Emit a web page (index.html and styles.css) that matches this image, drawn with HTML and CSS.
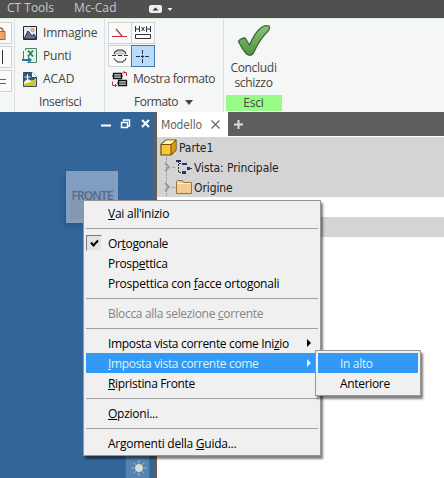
FILE: index.html
```html
<!DOCTYPE html>
<html lang="it">
<head>
<meta charset="utf-8">
<title>Parte1</title>
<link rel="stylesheet" href="styles.css">
</head>
<body>
<div class="app">
  <header class="tabs">
    <span class="tab tab-ct">CT Tools</span>
    <span class="tab tab-mc">Mc-Cad</span>
    <svg class="toggle" width="24" height="9" viewBox="0 0 24 9"><rect width="13" height="8" rx="2" fill="#eee"/><path d="M3.500 5.500h6L6.500 2.500z" fill="#333"/><path d="M18.500 3h5L21 6z" fill="#eee"/></svg>
  </header>
  <section class="ribbon">
    <div class="group group-cut">
      <span class="btn cut"><svg width="14" height="20" viewBox="0 0 14 20"><path d="M-2 9V7q2.500-4 5 0v2" fill="none" stroke="#a65b3c" stroke-width="1.500"/><rect x="-3" y="8.500" width="8" height="8" fill="#f2a36c" stroke="#b4623c"/></svg></span>
      <span class="btn cut"><svg width="14" height="20" viewBox="0 0 14 20"><path d="M2.500 3v14" stroke="#333"/></svg></span>
      <span class="btn cut"><svg width="14" height="20" viewBox="0 0 14 20"><path d="M0 8.500h6M0 12.500h6" stroke="#c0393c"/></svg></span>
    </div>
    <div class="group group-insert">
      <div class="tool"><svg width="16" height="16" viewBox="0 0 16 16"><path d="M1.500 1.500h13v13h-13z" fill="#e6e9f2" stroke="#20243c"/><path d="M2 14l4-8 4 5 2-2 2.500 5z" fill="#65708c" stroke="#222944"/><circle cx="10.500" cy="5" r="1.700" fill="#f2b880" stroke="#a47658" stroke-width=".5"/></svg><span class="t-img">Immagine</span></div>
      <div class="tool"><svg width="16" height="16" viewBox="0 0 16 16"><path d="M3.500 2.500v-2h11v14h-9" fill="#e5f0e7" stroke="#508267"/><path d="M1.500 3v8M14.500 4v9" stroke="#398171"/><path d="M6 2.500l5 6M11 2.500l-5 6" stroke="#2c8055" stroke-width="1.800"/><path d="M0 11h6V8.500l4 3.500-4 3.500V13H0z" fill="#2878a3"/></svg><span class="t-pun">Punti</span></div>
      <div class="tool"><svg width="16" height="16" viewBox="0 0 16 16"><path d="M1.500 1.500h9l4 4v10h-13z" fill="#315875" stroke="#305269"/><path d="M10 1v5h5" fill="#fff"/><path d="M2 11q3-4 6-2t6-2v8H2z" fill="#f2f3e8"/><path d="M2 13q6-1 12-5v7H2z" fill="#d9c51c"/><path d="M5.500 3v6M2.500 6h6" stroke="#fff"/></svg><span class="t-aca">ACAD</span></div>
      <div class="caption"><span class="t-ins">Inserisci</span></div>
    </div>
    <div class="group group-format">
      <div class="pair">
        <span class="btn"><svg width="22" height="20" viewBox="0 0 22 20"><path d="M3 13.500h15M7 6l6 7" stroke="#bc3035" fill="none" stroke-width="1.200"/></svg></span>
        <span class="btn"><svg width="22" height="20" viewBox="0 0 22 20"><path d="M3.500 3v6M3.500 6h4M7.500 3v6M18.500 3v6M14.500 6h4M14.500 3v6M9.500 4l3 4M12.500 4l-3 4M3.500 11.500h15v4h-15z" fill="none" stroke="#333"/></svg></span>
      </div>
      <div class="pair">
        <span class="btn"><svg width="22" height="20" viewBox="0 0 22 20"><path d="M5 8q0-4 4-4h4q4 0 4 4v1H5z" fill="#ccc"/><path d="M5 8q0-3 3-3V4h6v1q3 0 3 3M5 12q1 3 3 3v1h6v-1q3 0 3-3" fill="none" stroke="#333"/><path d="M3 9.500h4m2 0h4m2 0h4" stroke="#333"/></svg></span>
        <span class="btn active"><svg width="22" height="20" viewBox="0 0 22 20"><path d="M4 10.500h4m1 0h3m1 0h4M10.500 4v4m0 1v3m0 1v4" stroke="#20354c"/></svg></span>
      </div>
      <div class="tool"><svg width="16" height="16" viewBox="0 0 16 16"><path d="M1.500 2.500h8v5h-8zM6.500 9.500h8v5h-8z" fill="#ddd" stroke="#111" stroke-width="1.300"/><path d="M0 5h11M5 12h10" stroke="#111"/><path d="M12 1.500h2.500V5M.500 10.500v4H4M12.500 0L11 1.500 12.500 3M3 13l1.500 1.500L3 16" stroke="#bf3036" fill="none"/></svg><span class="t-mos">Mostra formato</span></div>
      <div class="caption"><span class="t-for">Formato</span><i class="down"></i></div>
    </div>
    <div class="group group-exit">
      <svg width="34" height="34" viewBox="0 0 34 34"><defs><linearGradient id="g" x2="0" y2="1"><stop stop-color="#8cc478"/><stop offset="1" stop-color="#4d943f"/></linearGradient></defs><path d="M1.500 17.500Q4 14 8 14l4.500 7Q18 8 25 3q4-2 7-1 1.500 2-1 5-9 9-14.500 22-3 4-7 1Q5 25 1.500 17.500z" fill="url(#g)" stroke="#3f6b3f" stroke-width="1.300"/></svg>
      <div class="finish">Concludi<br>schizzo</div>
      <div class="exit"><span class="t-esc">Esci</span></div>
    </div>
  </section>
  <main class="workspace">
    <section class="viewport">
      <svg class="winctl" width="50" height="10" viewBox="0 0 50 10"><path d="M0 6.500h10" stroke="#fff" stroke-width="2"/><path d="M22.500 2.500V1h6v6H27M20.500 3.500h6v5h-6z" fill="none" stroke="#fff" stroke-width="1.400"/><path d="M41 1l7 7M48 1l-7 7" stroke="#fff" stroke-width="2"/></svg>
      <div class="cube"><span class="t-cub">FRONTE</span></div>
      <div class="navbar"><svg width="16" height="16" viewBox="0 0 16 16"><path d="M8 0v16M0 8h16M2.500 2.500l11 11M13.500 2.500l-11 11" stroke="#a5bfd2"/><circle cx="8" cy="8" r="4.500" fill="#d4ddd9" stroke="#5c7f9f"/></svg></div>
    </section>
    <aside class="browser">
      <div class="browser-tabs"><div class="model"><span class="t-mod">Modello</span><svg width="9" height="9" viewBox="0 0 9 9"><path d="M.500.500l8 8M8.500.500l-8 8" stroke="#666" stroke-width="1.200"/></svg></div><svg class="plus" width="9" height="9" viewBox="0 0 9 9"><path d="M4.500 0v9M0 4.500h9" stroke="#ddd" stroke-width="2"/></svg></div>
      <div class="tree">
        <div class="node root"><svg width="17" height="17" viewBox="0 0 17 17"><path d="M1 5.500L6 1h10v10l-5 5H1z" fill="#f6c936" stroke="#6c4a13" stroke-width="1.200"/><path d="M2 5l4-3.500h9L11 5z" fill="#fff7bf"/><path d="M11 6l4.500-4v9L11 15.500z" fill="#dd9b13"/><path d="M1 5.500h10V16M11 5.500L16 1" fill="none" stroke="#6c4a13"/></svg><span class="t-par">Parte1</span></div>
        <div class="node child"><svg class="twist" width="13" height="20" viewBox="0 0 13 20"><path d="M3.500 0v20M9 10.500h4" stroke="#888" stroke-dasharray="1 1"/><path d="M2 6l4 4-4 4" fill="none" stroke="#999" stroke-width="1.800"/></svg><svg width="17" height="16" viewBox="0 0 17 16"><path d="M2.500 2v11M3 4.500h6M3 13.500h4M11 9.500h5" fill="none" stroke="#333" stroke-dasharray="2 1"/><path d="M0 1h5v2H0zM6 4h5v2H6zM6 12h4v3H6zM11 8h3v3h-3z" fill="#24386e"/></svg><span class="t-vis">Vista: Principale</span></div>
        <div class="node child"><svg class="twist" width="13" height="20" viewBox="0 0 13 20"><path d="M3.500 0v20M9 10.500h4" stroke="#888" stroke-dasharray="1 1"/><path d="M2 6l4 4-4 4" fill="none" stroke="#999" stroke-width="1.800"/></svg><svg width="17" height="16" viewBox="0 0 17 16"><path d="M.500 14.500v-12l1-1h5l1 2h8v11z" fill="#f0cd91" stroke="#987244"/><path d="M1 4.500h14" stroke="#fff0c7"/></svg><span class="t-ori">Origine</span></div>
      </div>
      <div class="row-blank"></div>
      <div class="row-grey"></div>
    </aside>
  </main>
</div>
<nav class="menu main-menu">
  <div class="item"><span class="m1"><u>V</u>ai all'inizio</span></div>
  <hr>
  <div class="item"><i class="check"><svg width="9" height="9" viewBox="0 0 9 9"><path d="M1 3.500l2.500 3L8 1.500" fill="none" stroke="#000" stroke-width="2"/></svg></i><span class="m2">Or<u>t</u>ogonale</span></div>
  <div class="item"><span class="m3">Prosp<u>e</u>ttica</span></div>
  <div class="item"><span class="m4">Prospettica con <u>f</u>acce ortogonali</span></div>
  <hr>
  <div class="item disabled"><span class="m5">Blocca alla selezione <u>c</u>orrente</span></div>
  <hr>
  <div class="item"><span class="m6">Imposta vista corrente come Ini<u>z</u>io</span><i class="arrow"></i></div>
  <div class="item selected"><span class="m7"><u>I</u>mposta vista corrente come</span><i class="arrow"></i></div>
  <div class="item"><span class="m8"><u>R</u>ipristina Fronte</span></div>
  <hr>
  <div class="item"><span class="m9"><u>O</u>pzioni...</span></div>
  <hr>
  <div class="item"><span class="m10">Argomenti della <u>G</u>uida...</span></div>
</nav>
<nav class="menu sub-menu">
  <div class="item selected"><span class="s1">In alto</span></div>
  <div class="item"><span class="s2">Anteriore</span></div>
</nav>
</body>
</html>
```
FILE: styles.css
```css
* { box-sizing: border-box; }
body { margin: 0; width: 444px; height: 478px; overflow: hidden; position: relative; font: 12px/20px "Open Sans", "Noto Sans", sans-serif; color: #444; }
svg { display: block; flex: none; overflow: visible; }
span { white-space: nowrap; }
.app { display: flex; flex-direction: column; height: 478px; }
.tabs { height: 18px; background: #505050; border-bottom: 1px solid #3f5a40; display: flex; color: #c8c8c8; line-height: 16px; padding-left: 7px; flex: none; }
.tab-ct { width: 67px; }
.tab-mc { width: 75px; }
.tab-mc { letter-spacing: .1px; }
.toggle { margin-top: 5px; }
.ribbon { height: 94px; background: #f5f6f6; border-top: 1px solid #e1f2dc; display: flex; flex: none; }
.group { border-right: 1px solid #dcdfe0; display: flex; flex-direction: column; flex: none; }
.group-cut { width: 15px; padding-top: 3px; gap: 2px; }
.btn { width: 24px; height: 22px; border: 1px solid #d0d2d3; background: #fafafa; display: flex; }
.btn.cut { width: 12px; border-left: 0; overflow: hidden; }
.btn.active { background: #b7dbf8; border-color: #4379a8; }
.group-insert { width: 90px; padding: 3px 0 0 7px; }
.tool { height: 24px; display: flex; align-items: center; gap: 5px; padding-bottom: 1px; }
.caption { height: 21px; display: flex; align-items: center; padding-top: 1px; }
.group-insert .caption { padding-left: 17px; }
.group-format { width: 119px; padding: 3px 0 0 3px; }
.pair { display: flex; height: 24px; }
.pair .btn + .btn { margin-left: -1px; }
.group-format .tool { padding-left: 4px; }
.group-format .caption { padding-left: 26px; gap: 7px; }
.down { border: 4px solid transparent; border-top: 5px solid #444; border-bottom: 0; }
.group-exit { width: 58px; border: 0; align-items: center; padding: 5px 0 0 1px; }
.finish { margin-top: 2px; line-height: 15px; text-align: center; letter-spacing: -.3px; }
.exit { width: 56px; height: 16px; background: #98fb85; line-height: 16px; text-align: center; margin-top: 5px; letter-spacing: -.2px; }
.t-img { letter-spacing: -.2px; }
.t-pun { letter-spacing: -.2px; }
.t-ins { letter-spacing: -.35px; }
.t-mos { letter-spacing: -.43px; }
.t-for { letter-spacing: -.5px; }
.workspace { display: flex; flex: 1; }
.viewport { width: 157px; background: #346598; border-right: 4px solid #5e5e5e; display: flex; flex-direction: column; }
.winctl { margin: 7px 0 0 101px; }
.cube { width: 52px; height: 52px; margin: 42px 0 0 66px; background: linear-gradient(#7f9fc4, #8795ae); border: 4px solid #829fc1; box-shadow: -3px 4px 5px -1px #29588b; line-height: 42px; text-align: center; color: #566b8c; font-size: 12px; font-weight: 600; letter-spacing: -.9px; }
.navbar { width: 25px; margin: auto 0 0 125px; height: 30px; background: #5584b3; border: 1px solid #426f9d; border-bottom: 0; padding: 11px 0 0 5px; }
.browser { flex: 1; background: #fff; font-family: "DejaVu Sans Condensed", "DejaVu Sans", sans-serif; color: #222; }
.browser-tabs { height: 24px; background: #5e5e5e; display: flex; }
.model { width: 71px; background: #fff; padding: 1px 0 0 4px; display: flex; align-items: center; gap: 9px; color: #666; }
.t-mod { letter-spacing: -.15px; }
.plus { margin: 8px 0 0 6px; }
.tree { margin-top: 1px; height: 60px; background: #d4d4d4; }
.node { height: 20px; display: flex; align-items: center; gap: 2px; }
.node span { padding-top: 1px; letter-spacing: -.1px; }
.root { padding-left: 3px; }
.child { padding-left: 6px; }
.twist { margin-right: -3px; }
.child .twist + svg { margin-left: 1px; }
.child span { margin-left: -1px; }
.row-blank { height: 20px; }
.row-grey { height: 20px; background: #d4d4d4; }
.menu { position: absolute; background: #f0f0f0; border: 1px solid #979797; padding: 2px; color: #000; box-shadow: 2px 3px 2px rgba(0,0,0,.5); }
.main-menu { left: 83px; top: 200px; width: 238px; height: 256px; }
.sub-menu { left: 315px; top: 350px; width: 106px; height: 46px; }
.item { height: 20px; line-height: 19px; padding-left: 22px; display: flex; align-items: center; letter-spacing: -.33px; }
.m1, .m4, .m9, .m10 { letter-spacing: -.25px; }
.item u { text-underline-offset: 1px; text-decoration-thickness: 1px; text-decoration-skip-ink: none; }
.menu hr { height: 1px; border: 0; background: #a0a0a0; margin: 5px 0 4px; }
.disabled { color: #848484; }
.selected { background: #3399f7; color: #d7f4ff; }
.arrow { margin-left: auto; margin-right: 7px; border: 4px solid transparent; border-left-color: currentColor; border-right: 0; }
.check { width: 16px; height: 16px; margin: 0 6px 0 -22px; border: 1px solid #888; border-color: #777 #eee #eee #777; background: #e3e3e3; display: flex; align-items: center; justify-content: center; }
```
